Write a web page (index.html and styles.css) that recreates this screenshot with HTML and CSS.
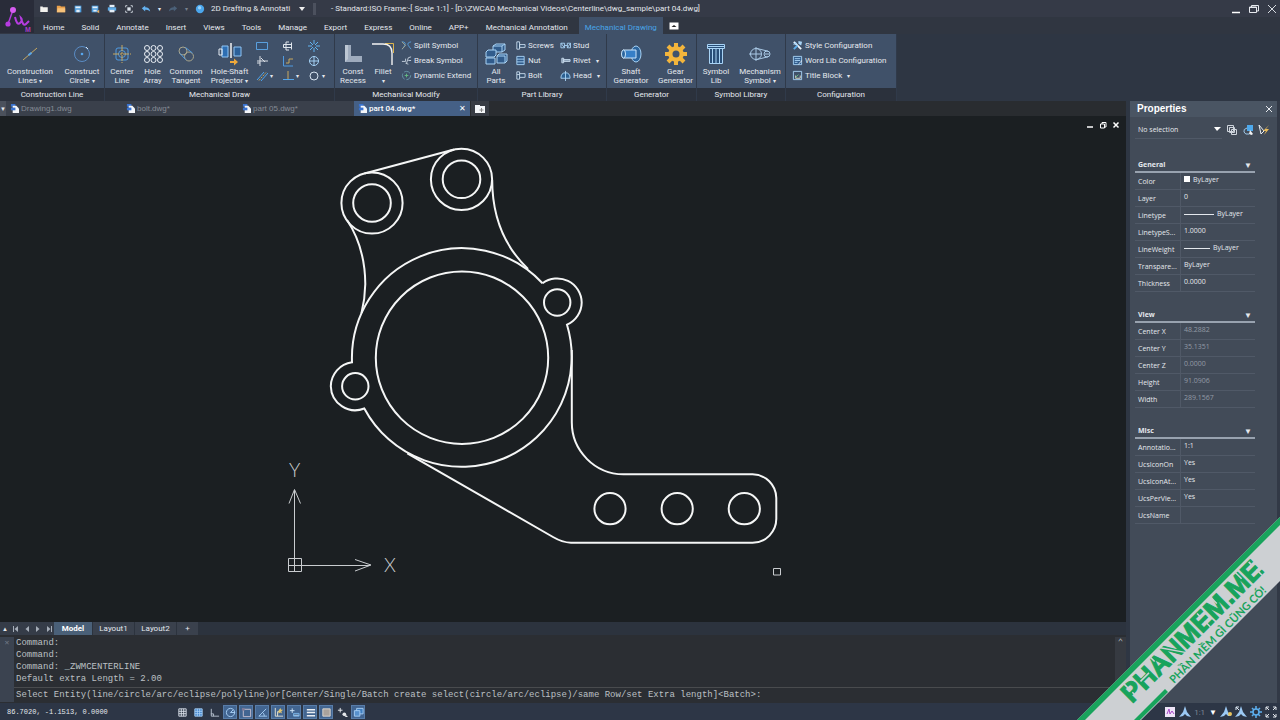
FILE: index.html
```html
<!DOCTYPE html>
<html lang="en">
<head>
<meta charset="utf-8">
<title>Part 04 - Mechanical Drawing</title>
<link rel="stylesheet" href="styles.css">
</head>
<body>
<div class="app">
  <header class="top">
    <svg class="logo" viewBox="0 0 34 33"><g fill="none" stroke="#b53ce0" stroke-width="1.4"><path d="M13 10L8 24"/><path d="M15 17q2 9 5 6t1-5q2 9 5 6t3-3" stroke-width="2"/></g><circle cx="13" cy="10" r="3" fill="#d65cf0"/><circle cx="8" cy="24" r="2.600" fill="#b63be2"/><text x="25" y="32" class="logo-mark">M</text></svg>
    <div class="bars">
      <div class="titlebar">
        <div class="quick">
          <button aria-label="New"><svg viewBox="0 0 12 12"><path d="M1.500 3h3v1h6v5.500h-9z" fill="#f3f2ee"/></svg></button>
          <button aria-label="Open"><svg viewBox="0 0 12 12"><path d="M1 2h4l1 1h5v7H1z" fill="#e9a04b"/><path d="M2 5h9v5H1z" fill="#f7c27a"/></svg></button>
          <button aria-label="Save"><svg viewBox="0 0 12 12"><path d="M2 2h8v8H2z" fill="#4d9ddd"/><path d="M3 3h6v2H3zM4 7h4v3H4z" fill="#e4eef8"/></svg></button>
          <button aria-label="Save as"><svg viewBox="0 0 12 12"><path d="M2 2h8v8H2z" fill="#4d9ddd"/><path d="M3 3h6v2H3zM4 7h4v2H4z" fill="#e4eef8"/><path d="M8 9l3-2v4z" fill="#e7ad61"/></svg></button>
          <button aria-label="Print"><svg viewBox="0 0 12 12"><path d="M3 1h6v3H3z" fill="#e4eef8"/><path d="M1 4h10v4H1z" fill="#5dabe8"/><path d="M3 7h6v3H3z" fill="#e4eef8"/></svg></button>
          <button aria-label="Preview"><svg viewBox="0 0 12 12"><path d="M2 4V2h2M8 2h2v2M10 8v2H8M4 10H2V8" fill="none" stroke="#dde4ec"/><path d="M4 4h4v4H4z" fill="#dde4ec"/></svg></button>
          <button aria-label="Undo"><svg viewBox="0 0 12 12"><path d="M1 5l4-3v2q5 0 6 5-3-3-6-2v2z" fill="#64b1ef"/></svg></button>
          <button aria-label="Undo list" class="slim">▾</button>
          <button aria-label="Redo"><svg viewBox="0 0 12 12"><path d="M11 5L7 2v2Q2 4 1 9q3-3 6-2v2z" fill="#4b6078"/></svg></button>
          <button aria-label="Redo list" class="slim dim">▾</button>
          <button aria-label="Help"><svg viewBox="0 0 12 12"><circle cx="6" cy="6" r="5" fill="#4ba6ec"/><circle cx="5.500" cy="4.500" r="2" fill="#9ad2fa"/></svg></button>
        </div>
        <select class="workspace" aria-label="Workspace"><option>2D Drafting &amp; Annotati</option></select>
        <i class="grip"></i>
        <h1>- Standard:ISO Frame:-[ Scale 1:1] - [D:\ZWCAD Mechanical Videos\Centerline\dwg_sample\part 04.dwg]</h1>
        <div class="win">
          <button aria-label="Minimize"><svg viewBox="0 0 10 10"><path d="M1 8.500h8" stroke="#fff" stroke-width="1.500"/></svg></button>
          <button aria-label="Restore"><svg viewBox="0 0 10 10"><path d="M.5 3h7v5.500h-7zM2.500 3V1.500h7V7h-2M1 3.500h6" fill="none" stroke="#e6e9ee"/></svg></button>
          <button aria-label="Close"><svg viewBox="0 0 10 10"><path d="M1 1l8 8M9 1L1 9" stroke="#d6dae0"/></svg></button>
        </div>
      </div>
      <nav class="menu">
        <button>Home</button><button>Solid</button><button>Annotate</button><button>Insert</button><button>Views</button><button>Tools</button><button>Manage</button><button>Export</button><button>Express</button><button>Online</button><button>APP+</button><button>Mechanical Annotation</button><button class="current">Mechanical Drawing</button>
        <button class="fold" aria-label="Collapse ribbon"><svg viewBox="0 0 10 8"><path d="M.5.500h9v7h-9z" fill="#fff"/><path d="M2.500 5L5 3l2.500 2z" fill="#222"/></svg></button>
      </nav>
    </div>
  </header>

  <div class="ribbon">
    <section class="group">
      <div class="tools g-line">
        <button class="big"><svg viewBox="0 0 24 24"><path d="M5 18L19 6" stroke="#c9a95f"/><path d="M10.500 13.300l3-2.600" stroke="#5aa7ea" stroke-width="2"/></svg>Construction<br>Lines <b>▾</b></button>
        <button class="big"><svg viewBox="0 0 24 24"><circle cx="12" cy="12" r="7.500" fill="none" stroke="#5a8cc4"/><circle cx="12" cy="12" r="1.300" fill="#57a7ef"/><path d="M16 5l2 2" stroke="#d9e8f7"/></svg>Construct<br>Circle <b>▾</b></button>
      </div><h2>Construction Line</h2>
    </section>
    <section class="group">
      <div class="tools g-draw">
        <button class="big"><svg viewBox="0 0 24 24"><rect x="6" y="6" width="12" height="12" rx="2" fill="none" stroke="#4f9be2"/><circle cx="12" cy="12" r="3.500" fill="none" stroke="#4f9be2"/><path d="M12 3v18M3 12h18" stroke="#c9a95f" stroke-dasharray="6 1 2 1"/></svg>Center<br>Line</button>
        <button class="big"><svg viewBox="0 0 24 24"><g fill="none" stroke="#e9eef4"><circle cx="6" cy="6" r="2.500"/><circle cx="12.500" cy="6" r="2.500"/><circle cx="19" cy="6" r="2.500"/><circle cx="6" cy="12" r="2.500"/><circle cx="12.500" cy="12" r="2.500"/><circle cx="19" cy="12" r="2.500"/><circle cx="6" cy="18" r="2.500"/><circle cx="12.500" cy="18" r="2.500"/><circle cx="19" cy="18" r="2.500"/></g></svg>Hole<br>Array</button>
        <button class="big"><svg viewBox="0 0 24 24"><g fill="none"><circle cx="9" cy="9" r="4" stroke="#a9a68d"/><circle cx="15" cy="14.500" r="4.500" stroke="#a9a68d"/><path d="M11.500 5.500l7 5.500M6 11.500l5.500 6" stroke="#4f9be2"/></g></svg>Common<br>Tangent</button>
        <button class="big"><svg viewBox="0 0 24 24"><path d="M4 4h6v11H4z" fill="#2d6eb3" stroke="#8fc5f5"/><path d="M1 7h3v6H1z" fill="none" stroke="#e5edf5"/><path d="M13 1v15" stroke="#f3f3f3" stroke-width="1.500"/><path d="M16 5h7v9h-7z" fill="#2c6098" stroke="#8fc5f5"/><path d="M12 19h4v-2.500l4 3.500-4 3.500V21h-4z" fill="#eda83b"/></svg>Hole-Shaft<br>Projector <b>▾</b></button>
        <div class="matrix">
          <button aria-label="Rectangle"><svg viewBox="0 0 12 12"><path d="M.5 2.500h11v7H.5z" fill="#37506f" stroke="#5aa0de"/></svg></button><i></i>
          <button aria-label="Shaft end"><svg viewBox="0 0 12 12"><path d="M1.500 4.500h8v3h-8zM4 2v8M9.500 2.500v7M4 2h3M4 10h3" fill="none" stroke="#e0e6ed"/></svg></button><i></i>
          <button aria-label="Burst"><svg viewBox="0 0 12 12"><path d="M6 0v4M6 8v4M0 6h4M8 6h4M2 2l3 3M7 7l3 3M10 2L7 5M5 7l-3 3" stroke="#60b4f2"/></svg></button><i></i>
          <button aria-label="Break"><svg viewBox="0 0 12 12"><path d="M4 1v10M1 6h11M5 3l4 4M1 8h3" stroke="#d9dee5" fill="none"/></svg></button><i></i>
          <button aria-label="Angle"><svg viewBox="0 0 12 12"><path d="M1.500 1v10H11" fill="none" stroke="#4f9be2"/><path d="M4 8h3V4h4" fill="none" stroke="#c9a95f"/></svg></button><i></i>
          <button aria-label="Target"><svg viewBox="0 0 12 12"><circle cx="6" cy="6" r="4.500" fill="none" stroke="#a3d0f4"/><path d="M6 1v10M1 6h10" stroke="#a3d0f4"/></svg></button><i></i>
          <button aria-label="Parallel"><svg viewBox="0 0 12 12"><path d="M1 10l7-8M5 11l7-8" stroke="#4fa4ec"/><path d="M3 10.500l7-8" stroke="#c9a95f" stroke-dasharray="2 1"/></svg></button><i>▾</i>
          <button aria-label="Perpendicular"><svg viewBox="0 0 12 12"><path d="M6 1v9" stroke="#c9a95f"/><path d="M1 9.500h11" stroke="#55a6eb"/></svg></button><i>▾</i>
          <button aria-label="Circle"><svg viewBox="0 0 12 12"><circle cx="6" cy="6" r="4" fill="none" stroke="#d5e2ef"/></svg></button><i>▾</i>
        </div>
      </div><h2>Mechanical Draw</h2>
    </section>
    <section class="group">
      <div class="tools g-modify">
        <button class="big"><svg viewBox="0 0 24 24"><path d="M4 3h6v11h11v6H4z" fill="#9eabbd"/><path d="M4 3h3v14l-3 3z" fill="#bcc6d3"/></svg>Const<br>Recess</button>
        <button class="big"><svg viewBox="0 0 24 24"><path d="M14 1.500h8.500V11" fill="none" stroke="#dcb44d"/><path d="M1 2h11q9 0 9 9v12" fill="none" stroke="#f3f3f3" stroke-width="1.400"/></svg>Fillet<br><b>▾</b></button>
        <div class="list">
          <button><svg viewBox="0 0 12 12"><path d="M1 2q5 0 3 4t-3 4M11 2Q6 3 8 6t3 4" fill="none" stroke="#56a0dd"/><path d="M1 2l4 4-4 4" fill="none" stroke="#a9a68d"/></svg>Split Symbol</button>
          <button><svg viewBox="0 0 12 12"><path d="M1 7h4V4M6 9l2-6M8 6h3M8 3l3-1M5 9l3 1" fill="none" stroke="#c8d3df"/></svg>Break Symbol</button>
          <button><svg viewBox="0 0 12 12"><circle cx="6" cy="6" r="4.500" fill="none" stroke="#6798aa" stroke-dasharray="7 2"/><path d="M6 4v4M4 6h4" stroke="#64bb83"/></svg>Dynamic Extend</button>
        </div>
      </div><h2>Mechanical Modify</h2>
    </section>
    <section class="group">
      <div class="tools g-parts">
        <button class="big"><svg viewBox="0 0 24 24"><g fill="#315c8c" stroke="#a8d3f5"><path d="M9 4l3-2h9v6l-3 2H9z"/><path d="M9 4h9v6M18 4l3-2" fill="none"/><path d="M2 10l2-2h8v5l-2 2H2z"/><path d="M2 16h9v6H2zM13 14l2-2h8v7l-2 2h-8z"/><path d="M13 14h8v7" fill="none"/></g></svg>All<br>Parts</button>
        <div class="list">
          <button><svg viewBox="0 0 12 12"><path d="M2 2h3v8H2zM5 5h6v3H5z" fill="#314d6b" stroke="#c9dced"/></svg>Screws</button>
          <button><svg viewBox="0 0 12 12"><path d="M2 1.500h8v9H2zM2 4.500h8M2 7.500h8" fill="#315c8c" stroke="#a8d3f5"/></svg>Nut</button>
          <button><svg viewBox="0 0 12 12"><path d="M2 2h3v8H2zM5 4h6v4H5M2 5h3" fill="#314d6b" stroke="#c9dced"/></svg>Bolt</button>
        </div>
        <div class="list">
          <button><svg viewBox="0 0 12 12"><path d="M1 3.500h4v5H1zM8 3.500h3.500v5H8zM5 6h3M1 3.500l4 5M8 8.500l3.500-5" fill="none" stroke="#a8d3f5"/></svg>Stud</button>
          <button><svg viewBox="0 0 12 12"><path d="M2 3.500h2v5H2zM4 5h7v2H4z" fill="#8299b1" stroke="#c9dced"/></svg>Rivet <b>▾</b></button>
          <button><svg viewBox="0 0 12 12"><path d="M1 9q0-6 5-6t5 6zM6 1v11" fill="#2d6192" stroke="#a8d3f5"/></svg>Head <b>▾</b></button>
        </div>
      </div><h2>Part Library</h2>
    </section>
    <section class="group">
      <div class="tools g-gen">
        <button class="big"><svg viewBox="0 0 24 24"><ellipse cx="17" cy="12" rx="5" ry="8" fill="#2c659e" stroke="#a8d3f5"/><path d="M4 8h13v8H4q-2-4 0-8z" fill="#367fc7" stroke="#cae4fa"/><ellipse cx="4.500" cy="12" rx="2" ry="4" fill="#2c659e" stroke="#cae4fa"/></svg>Shaft<br>Generator</button>
        <button class="big"><svg viewBox="0 0 24 24"><g stroke="#f3b53c" stroke-width="4"><path d="M12 1v22M1 12h22M4 4l16 16M20 4L4 20"/></g><circle cx="12" cy="12" r="7.800" fill="#f3b53c"/><circle cx="12" cy="12" r="3.500" fill="#40536d"/></svg>Gear<br>Generator</button>
      </div><h2>Generator</h2>
    </section>
    <section class="group">
      <div class="tools g-sym">
        <button class="big"><svg viewBox="0 0 24 24"><path d="M3.500 2.500h17v4h-17zM5.500 6.500h13v15h-13z" fill="#284e78" stroke="#a8d3f5"/><path d="M8.500 7v14M12 7v14M15.500 7v14M4 4.500h16" stroke="#a8d3f5"/></svg>Symbol<br>Lib</button>
        <button class="big"><svg viewBox="0 0 24 24"><g fill="none" stroke="#a9c9e6"><circle cx="8" cy="12" r="5.500"/><circle cx="19" cy="12" r="3"/><path d="M9 6.500l11 2.700M9 17.500l11-2.700M1 12h12M8 5v14M17 12h4"/></g></svg>Mechanism<br>Symbol <b>▾</b></button>
      </div><h2>Symbol Library</h2>
    </section>
    <section class="group">
      <div class="tools g-conf">
        <div class="list">
          <button><svg viewBox="0 0 12 12"><path d="M2 2l8 8" stroke="#edf4fb" stroke-width="2"/><path d="M1 5l3-3 2 3zM7 1l4 1-1 4-3-2z" fill="#a8d3f5"/><path d="M2 10l4-4" stroke="#60aeea" stroke-width="2"/></svg>Style Configuration</button>
          <button><svg viewBox="0 0 12 12"><path d="M1.500 1.500h9v9h-9zM3 4h6M3 6h6M3 8h3" fill="#315c8c" stroke="#a8d3f5"/><path d="M7 10l4-4" stroke="#f3f3f3"/></svg>Word Lib Configuration</button>
          <button><svg viewBox="0 0 12 12"><path d="M1.500 1.500h9v9h-9z" fill="none" stroke="#a8d3f5"/><path d="M4 9V6M4 9h5V6" fill="none" stroke="#dfdcc5"/><path d="M4 8l3-3" stroke="#65c48a"/></svg>Title Block <b>▾</b></button>
        </div>
      </div><h2>Configuration</h2>
    </section>
  </div>

  <div class="body">
    <main class="work">
      <div class="docs">
        <button class="pick" aria-label="Document list">▼</button>
        <button class="doc"><svg viewBox="0 0 10 10"><path d="M1 0h5v3H1z" fill="#3973d1"/><path d="M3 2h4l3 3v5H3z" fill="#f4f6f9"/><path d="M1 4h5v3H1z" fill="#3973d1"/></svg>Drawing1.dwg</button>
        <button class="doc"><svg viewBox="0 0 10 10"><path d="M1 0h5v3H1z" fill="#3973d1"/><path d="M3 2h4l3 3v5H3z" fill="#f4f6f9"/><path d="M1 4h5v3H1z" fill="#3973d1"/></svg>bolt.dwg*</button>
        <button class="doc"><svg viewBox="0 0 10 10"><path d="M1 0h5v3H1z" fill="#3973d1"/><path d="M3 2h4l3 3v5H3z" fill="#f4f6f9"/><path d="M1 4h5v3H1z" fill="#3973d1"/></svg>part 05.dwg*</button>
        <button class="doc open"><svg viewBox="0 0 10 10"><path d="M1 0h5v3H1z" fill="#3973d1"/><path d="M3 2h4l3 3v5H3z" fill="#f4f6f9"/><path d="M1 4h5v3H1z" fill="#3973d1"/></svg>part 04.dwg*<span>✕</span></button>
        <button class="add" aria-label="New document"><svg viewBox="0 0 10 8"><path d="M0 0h5v1h5v7H0z" fill="#f4f6f9"/><path d="M6.500 3v4M4.500 5h4" stroke="#888"/></svg></button>
      </div>
      <div class="canvas">
        <svg viewBox="0 116 1126 506" preserveAspectRatio="xMinYMin meet" role="img" aria-label="Bracket drawing">
          <g class="part">
            <circle cx="372" cy="203" r="30.600"/><circle cx="372" cy="203" r="18.800"/>
            <circle cx="461.500" cy="179.300" r="30.600"/><circle cx="461.500" cy="179.300" r="18.800"/>
            <circle cx="462" cy="357.700" r="86.200"/>
            <path d="M542.500 283.300A110 110 0 0 0 352 362.300A24.500 24.500 0 0 0 330.800 386.300A24.500 24.500 0 0 0 364.300 408.500A110.200 110.200 0 0 0 567 324.700A24.500 24.500 0 0 0 581.700 302.500A24.500 24.500 0 0 0 542.500 283.300"/>
            <circle cx="557.200" cy="302.500" r="13.200"/><circle cx="355.300" cy="386.300" r="13.200"/>
            <path d="M364.500 173.500L454 149.500"/>
            <path d="M347 220Q365 247 365.300 284Q365 299 361.500 313"/>
            <path d="M492.200 180C492.200 215 504 246 528 269"/>
            <path d="M571.800 350V422A52 52 0 0 0 623.500 474.300H752.500A24 24 0 0 1 776.300 498V518.500A24 24 0 0 1 752.500 542.800H571Q562 542.300 553 537L407.300 453.300"/>
            <circle cx="610" cy="508.700" r="15.600"/><circle cx="677.200" cy="508.700" r="15.600"/><circle cx="744.300" cy="508.700" r="15.600"/>
          </g>
          <g class="axis"><path d="M288.500 558.500h13v13h-13zM288 565.500H370M294.500 571V490M289 503.500l5.500-14 6 14M355 559.500l16 5.500-16 6"/><path d="M773.500 568.500h7v6.500h-7z"/></g>
          <text x="289" y="477" class="axis-name">Y</text><text x="384" y="572" class="axis-name">X</text>
        </svg>
        <div class="sheet-win">
          <button aria-label="Minimize drawing"><svg viewBox="0 0 8 8"><path d="M1 6h6" stroke="#fff" stroke-width="1.500"/></svg></button>
          <button aria-label="Restore drawing"><svg viewBox="0 0 8 8"><path d="M1.500 3h4v4h-4zM3 3V1.500h4V6H5.500" fill="none" stroke="#fff"/></svg></button>
          <button aria-label="Close drawing"><svg viewBox="0 0 8 8"><path d="M1.500 1.500l5 5M6.500 1.500l-5 5" stroke="#fff" stroke-width="1.500"/></svg></button>
        </div>
      </div>
      <div class="layouts">
        <button class="step lit" aria-label="More">▲</button>
        <button class="step" aria-label="First"><svg viewBox="0 0 8 8"><path d="M1.500 1v6" stroke="#a5adb8"/><path d="M6 1v6L2.500 4z" fill="#a5adb8"/></svg></button>
        <button class="step" aria-label="Previous"><svg viewBox="0 0 8 8"><path d="M6 1v6L2.500 4z" fill="#a5adb8"/></svg></button>
        <button class="step" aria-label="Next"><svg viewBox="0 0 8 8"><path d="M2 1v6l3.500-3z" fill="#a5adb8"/></svg></button>
        <button class="step" aria-label="Last"><svg viewBox="0 0 8 8"><path d="M2 1v6l3.500-3z" fill="#a5adb8"/><path d="M6.500 1v6" stroke="#a5adb8"/></svg></button>
        <button class="sheet on">Model</button><button class="sheet">Layout1</button><button class="sheet">Layout2</button><button class="sheet plus">+</button>
      </div>
      <div class="console">
        <button class="shut" aria-label="Close command line">✕</button>
        <div class="log">
          <div class="history"><p>Command:</p><p>Command:</p><p>Command: _ZWMCENTERLINE</p><p>Default extra Length = 2.00</p></div>
          <label class="prompt"><span>Select Entity(line/circle/arc/eclipse/polyline)or[Center/Single/Batch create select(circle/arc/eclipse)/same Row/set Extra length]&lt;Batch&gt;:</span><input type="text"></label>
        </div>
        <div class="scroll"><i>⌃</i><i class="thumb"></i></div>
      </div>
    </main>
    <aside class="props">
      <header><h2>Properties</h2><button aria-label="Close properties"><svg viewBox="0 0 8 8"><path d="M1 1l6 6M7 1L1 7" stroke="#e6e9ee"/></svg></button></header>
      <div class="choose">
        <select aria-label="Selection"><option>No selection</option></select>
        <button aria-label="Toggle selection mode"><svg viewBox="0 0 12 12"><path d="M1.500 1.500h6v6h-6zM3.500 3.500h5v5h-5zM5.500 5.500h5v5h-5z" fill="none" stroke="#cfd5dd"/></svg></button>
        <button aria-label="Select objects"><svg viewBox="0 0 12 12"><path d="M5 1h6v6H5z" fill="#4ea9ec"/><path d="M5 4Q1 5 2 8t5 2" fill="none" stroke="#9fc8e8"/><path d="M8 6l3 4-1.500 1L7 10z" fill="#f1f1f1"/></svg></button>
        <button aria-label="Quick select"><svg viewBox="0 0 12 12"><path d="M1 1l5 6-3 3z" fill="none" stroke="#eceff3"/><path d="M11 1L5 7h3l-2 4 5-6H8z" fill="#eabc5b"/></svg></button>
      </div>
      <section><h3>General<i>▼</i></h3>
        <table>
          <tr><th>Color</th><td><i class="swatch"></i>ByLayer</td></tr>
          <tr><th>Layer</th><td>0</td></tr>
          <tr><th>Linetype</th><td><i class="rule long"></i>ByLayer</td></tr>
          <tr><th>LinetypeS...</th><td>1.0000</td></tr>
          <tr><th>LineWeight</th><td><i class="rule"></i>ByLayer</td></tr>
          <tr><th>Transpare...</th><td>ByLayer</td></tr>
          <tr><th>Thickness</th><td>0.0000</td></tr>
        </table>
      </section>
      <section><h3>View<i>▼</i></h3>
        <table class="fixed">
          <tr><th>Center X</th><td>48.2882</td></tr>
          <tr><th>Center Y</th><td>35.1351</td></tr>
          <tr><th>Center Z</th><td>0.0000</td></tr>
          <tr><th>Height</th><td>91.0906</td></tr>
          <tr><th>Width</th><td>289.1567</td></tr>
        </table>
      </section>
      <section><h3>Misc<i>▼</i></h3>
        <table>
          <tr><th>Annotatio...</th><td>1:1</td></tr>
          <tr><th>UcsIconOn</th><td>Yes</td></tr>
          <tr><th>UcsIconAt...</th><td>Yes</td></tr>
          <tr><th>UcsPerVie...</th><td>Yes</td></tr>
          <tr><th>UcsName</th><td></td></tr>
        </table>
      </section>
    </aside>
  </div>

  <footer class="status">
    <output>86.7020, -1.1513, 0.0000</output>
    <div class="modes">
      <button aria-label="Snap"><svg viewBox="0 0 12 12"><path d="M2 2h8v8H2zM2 4.700h8M2 7.300h8M4.700 2v8M7.300 2v8" fill="none" stroke="#dce3ec"/></svg></button>
      <button aria-label="Grid"><svg viewBox="0 0 12 12"><path d="M2 2h8v8H2z" fill="#3b7ec8"/><path d="M2 2h8v8H2zM2 4.700h8M2 7.300h8M4.700 2v8M7.300 2v8" fill="none" stroke="#a9d0f5"/></svg></button>
      <button aria-label="Ortho"><svg viewBox="0 0 12 12"><path d="M2.500 2v8H11M2 7.500h3V10" fill="none" stroke="#b9c4d1"/></svg></button>
      <button class="on" aria-label="Polar"><svg viewBox="0 0 12 12"><circle cx="6" cy="6" r="4.500" fill="none" stroke="#a9d0f5"/><path d="M6 6h5M6 6l3-3" stroke="#a9d0f5"/></svg></button>
      <button class="on" aria-label="Object snap"><svg viewBox="0 0 12 12"><path d="M2.500 2.500h8v8h-8z" fill="none" stroke="#c9c1d0"/><path d="M1 1h3v3H1z" fill="#7b7897"/></svg></button>
      <button class="on" aria-label="Tracking"><svg viewBox="0 0 12 12"><path d="M11 10H2l8-8M6 6q2 1 2 4" fill="none" stroke="#a9d0f5"/></svg></button>
      <button class="on" aria-label="Dynamic UCS"><svg viewBox="0 0 12 12"><path d="M2.500 1v9H11M5 10V5h3" fill="none" stroke="#e8e5d4"/><path d="M8 1l1 2h2L9 5l1 2-2-1-2 1V4z" fill="#dfc36f"/></svg></button>
      <button class="on" aria-label="Dynamic input"><svg viewBox="0 0 12 12"><path d="M1 4h5M3.500 1.500v5M5 9h6" stroke="#d3e9fb"/><path d="M5 7h6v3H5z" fill="none" stroke="#7ab5e8"/></svg></button>
      <button class="on" aria-label="Lineweight"><svg viewBox="0 0 12 12"><path d="M2 3h9M2 6h9M2 9.500h9" stroke="#e9edf2" stroke-width="1.500"/></svg></button>
      <button class="on" aria-label="Transparency"><svg viewBox="0 0 12 12"><path d="M2 2h8v8H2z" fill="#a9a29c" stroke="#ded8d0"/></svg></button>
      <button aria-label="Cycling"><svg viewBox="0 0 12 12"><path d="M1 3.500h5M3.500 1v5" stroke="#eef1f4"/><circle cx="8" cy="8" r="2" fill="#e5e8ec"/><path d="M9 8l3 3H9z" fill="#e5e8ec"/></svg></button>
      <button class="on" aria-label="Workspace view"><svg viewBox="0 0 12 12"><path d="M4 1.500h7v6H4z" fill="#3e7dbf" stroke="#a9d0f5"/><path d="M1.500 4h6v6h-6z" fill="#5791cd" stroke="#a9d0f5"/></svg></button>
    </div>
    <div class="tray">
      <button aria-label="Mechanical"><svg viewBox="0 0 12 12"><path d="M1 1h10v10H1z" fill="#eee4f7"/><path d="M3 8l2-5 1 5 2-3 2 3" fill="none" stroke="#a847c9"/></svg></button>
      <button aria-label="Annotation scale"><svg viewBox="0 0 12 12"><path d="M6 0l2 6 4 5-4-1-2-2-2 2-4 1 4-5z" fill="#9cc9f4"/></svg></button>
      <button class="ratio">1:1 <b>▼</b></button>
      <button aria-label="Annotation visibility"><svg viewBox="0 0 12 12"><path d="M6 0l2 6 3 4-3 0-2-2-2 2-4 1 4-5z" fill="#9cc9f4"/><circle cx="10" cy="8" r="2" fill="#e8c35e"/></svg></button>
      <button aria-label="Auto scale"><svg viewBox="0 0 12 12"><path d="M6 0l2 6 4 5-4-1-2-2-2 2-4 1 4-5z" fill="#9cc9f4"/><path d="M1 1l3 3M1 4V1h3" fill="none" stroke="#dfeaf5"/></svg></button>
      <button aria-label="Settings"><svg viewBox="0 0 12 12"><path d="M6 0v12M0 6h12M2 2l8 8M10 2l-8 8" stroke="#5db0f0" stroke-width="1.500"/><circle cx="6" cy="6" r="3" fill="#2d3545" stroke="#5db0f0" stroke-width="1.500"/></svg></button>
      <button aria-label="Full screen"><svg viewBox="0 0 12 12"><path d="M1 4V1h3M8 1h3v3M11 8v3H8M4 11H1V8M1 1l3 3M11 1L8 4M11 11L8 8M1 11l3-3" fill="none" stroke="#e3e7ec"/></svg></button>
    </div>
  </footer>

  <svg class="banner" viewBox="0 0 204 204" role="img" aria-label="PHANMEM.ME">
    <path d="M0 204L204 0V64L64 204z" fill="#cdd0d3"/>
    <path d="M0 204L204 0V8L8 204z" fill="#18a35c"/>
    <path d="M57 204L89 172l3 3-29 29z" fill="#18a35c"/>
    <g transform="translate(56 187) rotate(-45)">
      <text class="brand" x="0" y="0">PHANMEM.ME</text>
      <path class="cuts" d="M8.500-21v8M8.500-8V1M22-10h12M46-21v7M59-21l15 22M87-21v10M110-7v8M110-18v6M131-21v10M166-21v10M183-7v8M183-18v6"/>
    </g>
    <text class="motto" transform="translate(98 167) rotate(-45)">PHẦN MỀM GÌ CŨNG CÓ!</text>
  </svg>
</div>
</body>
</html>
```

FILE: styles.css
```css
* { box-sizing: border-box; }
body { margin: 0; background: #1b1f22; color: #e4e8ed; font: 8px/9px Roboto, "Noto Sans", sans-serif; }
h1, h2, h3, p { margin: 0; font-size: inherit; font-weight: 400; }
button, select, input { margin: 0; padding: 0; border: 0; background: none; color: inherit; font: inherit; }
button { display: flex; align-items: center; justify-content: center; white-space: nowrap; }
i, b { font-style: normal; font-weight: 400; }
svg { display: block; flex: none; }

.app { position: relative; display: flex; flex-direction: column; min-height: 100vh; overflow: hidden; background: #2e3643; }

.top { display: flex; background: #323845; }
.logo { width: 34px; height: 33px; background: #292c39; }
.logo-mark { fill: #a63bc6; font: 700 7px "Liberation Sans", sans-serif; }
.bars { flex: 1; min-width: 0; }
.titlebar { display: flex; align-items: center; height: 17px; background: #353a47; }
.quick { display: flex; align-items: center; padding-left: 1px; }
.quick button { width: 17px; height: 16px; }
.quick svg { width: 10px; height: 10px; }
.quick .slim { width: 10px; font-size: 6px; }
.dim { color: #78818e; }
.workspace { width: 98px; height: 14px; margin-left: 2px; padding-left: 1px; appearance: none; background: url("data:image/svg+xml,%3Csvg xmlns='http://www.w3.org/2000/svg' width='6' height='4'%3E%3Cpath d='M0 0h6L3 4z' fill='%23eee'/%3E%3C/svg%3E") no-repeat right 3px center; }
.grip { width: 3px; height: 12px; margin: 0 15px 0 5px; background: #4c515e; }
.titlebar h1 { flex: 1; white-space: nowrap; }
.win { display: flex; gap: 8px; padding-right: 3px; }
.win svg { width: 10px; height: 10px; }
.menu { display: flex; height: 17px; padding-left: 1px; background: #303641; }
.menu button { padding: 4px 9px 0 8px; }
.menu .current { padding: 4px 6px 0; margin-left: 2px; background: #405169; color: #48a5e7; }
.menu .fold { padding: 0 6px; }
.fold svg { width: 10px; height: 8px; }

.ribbon { display: grid; grid-template-columns: 105px 230px 143px 129px 90px 89px 111px; height: 67px; background: #2e3643; }
.group { display: flex; flex-direction: column; border-right: 1px solid #303a4a; }
.tools { display: grid; flex: 1; background: #405169; }
.tools b, .matrix i { font-size: 6px; }
.group h2 { height: 13px; background: #2b313c; line-height: 13px; text-align: center; }
.g-line { grid-template-columns: 60px 1fr; }
.g-draw { grid-template-columns: 34px 27px 40px 47px 1fr; }
.g-modify { grid-template-columns: 36px 24px 1fr; }
.g-parts { grid-template-columns: 36px 46px 1fr; }
.g-gen { grid-template-columns: 48px 1fr; }
.g-sym { grid-template-columns: 38px 1fr; }
.big { display: block; padding-top: 5px; text-align: center; }
.big svg { width: 24px; height: 24px; margin: 0 auto 1px; }
.matrix { display: grid; grid-template-columns: repeat(3, 12px 14px); grid-auto-rows: 15px; padding: 4px 0 0 3px; align-items: center; }
.matrix i { padding-left: 2px; }
.matrix svg { width: 12px; height: 12px; }
.list { display: flex; flex-direction: column; padding: 4px 0 0 6px; }
.list button { height: 15px; gap: 2px; justify-content: flex-start; }
.list b { padding-left: 3px; }
.list svg { width: 11px; height: 11px; }
.g-parts .list { padding-left: 0; }
.g-parts .list:nth-child(2) { padding-left: 1px; }

.body { display: flex; flex: 1; }
.work { display: flex; flex: 1; flex-direction: column; min-width: 0; }
.docs { display: flex; height: 15px; background: #292c30; }
.pick { width: 6px; background: #4b515c; font-size: 6px; }
.doc { width: 116px; gap: 2px; padding: 0 4px; justify-content: flex-start; background: #3a404b; color: #858b95; font-family: "Liberation Sans", sans-serif; }
.doc svg { width: 9px; height: 9px; }
.open { background: #456086; color: #fff; font-family: Roboto, sans-serif; font-weight: 500; }
.open span { margin-left: auto; }
.add { width: 18px; margin-left: 1px; background: #383c44; }
.add svg { width: 10px; height: 8px; }
.canvas { position: relative; flex: 1; background: #1b1f22; }
.canvas > svg { width: 100%; }
.part { fill: none; stroke: #f5f6f6; stroke-width: 2; }
.axis { fill: none; stroke: #c9cccf; stroke-width: 1; }
.axis-name { fill: #c9cccf; font: 300 19px Lato, sans-serif; }
.sheet-win { position: absolute; top: 5px; right: 6px; display: flex; gap: 5px; }
.sheet-win svg { width: 8px; height: 8px; }
.layouts { display: flex; height: 13px; background: #2c333e; }
.step { width: 11px; background: #353c48; }
.step svg { width: 8px; height: 8px; }
.lit { width: 10px; font-size: 6px; }
.sheet { width: 41px; margin-right: 1px; background: #3a414d; }
.sheet.on { width: 38px; background: #4a6078; color: #fff; font-weight: 700; }
.sheet.plus { width: 21px; }
.console { display: flex; height: 68px; padding: 2px 0 1px; background: #2b2e33; color: #bcc0c4; font: 9px/12px "Liberation Mono", monospace; }
.shut { width: 14px; padding-bottom: 54px; background: #3b4350; color: #727b88; font-size: 8px; }
.log { display: flex; flex: 1; flex-direction: column; min-width: 0; }
.history { flex: 1; padding: 0 2px; border-bottom: 1px solid #494b4e; }
.prompt { display: flex; height: 14px; padding: 0 2px; line-height: 14px; white-space: nowrap; }
.prompt input { flex: 1; min-width: 0; outline: 0; }
.scroll { display: flex; flex-direction: column; justify-content: space-between; width: 11px; margin-bottom: 14px; background: #363a41; text-align: center; }
.thumb { height: 4px; background: #5c626b; }

.props { width: 150px; margin-left: 4px; padding-left: 5px; border-right: 3px solid #323946; background: #424b58; font: 7px/17px "Open Sans", "Noto Sans", sans-serif; }
.props > header { display: flex; align-items: center; justify-content: space-between; height: 16px; margin-left: -5px; padding: 0 4px 0 7px; background: #4a5563; }
.props > header h2 { color: #fff; font: 700 10px/16px "Liberation Sans", sans-serif; }
.props > header svg { width: 8px; height: 8px; }
.choose { display: flex; align-items: center; gap: 4px; height: 25px; }
.choose select { width: 87px; height: 18px; padding: 0 3px; appearance: none; border-bottom: 1px solid #505967; background: url("data:image/svg+xml,%3Csvg xmlns='http://www.w3.org/2000/svg' width='7' height='4'%3E%3Cpath d='M0 0h7L3 4z' fill='%23fff'/%3E%3C/svg%3E") no-repeat right 1px center; }
.choose svg { width: 12px; height: 12px; }
.props section { width: 120px; padding-top: 15px; }
.props h3 { display: flex; justify-content: space-between; height: 16px; padding: 0 3px; border-bottom: 2px solid #98a2af; font-weight: 700; line-height: 15px; }
.props h3 i { font-size: 8px; }
.props table { width: 100%; border-collapse: separate; border-spacing: 0; table-layout: fixed; }
.props tr { height: 17px; }
.props th { width: 45px; padding: 1px 0 0 3px; border-bottom: 1px solid #505967; font-weight: 400; line-height: 15px; text-align: left; white-space: nowrap; }
.props td { padding: 0 0 2px 3px; border-bottom: 1px solid #505967; border-left: 1px solid #505967; line-height: 14px; white-space: nowrap; }
.fixed td { color: #929aa5; }
.swatch { display: inline-block; width: 6px; height: 6px; margin-right: 3px; background: #fff; }
.rule { display: inline-block; width: 26px; margin-right: 3px; border-top: 1px solid #e4e8ed; vertical-align: middle; }
.long { width: 30px; }

.status { display: flex; align-items: center; height: 18px; background: #2d3646; }
.status output { width: 175px; padding-left: 7px; font: 7px/9px "Liberation Mono", monospace; }
.modes { display: flex; gap: 2px; }
.modes button { width: 14px; height: 14px; }
.modes .on { background: #426591; border: 1px solid #587da9; }
.modes svg { width: 11px; height: 11px; }
.tray { display: flex; align-items: center; gap: 3px; margin-left: auto; padding-right: 3px; }
.tray svg { width: 12px; height: 12px; }
.ratio { gap: 4px; color: #7e8896; }
.ratio b { color: #fff; }
.banner { position: absolute; right: 0; bottom: 0; width: 204px; height: 204px; pointer-events: none; }
.brand { fill: #18a35c; stroke: #18a35c; stroke-width: 1; font: 700 27px "Liberation Sans", sans-serif; }
.cuts { fill: none; stroke: #cdd0d3; stroke-width: 1.5; }
.motto { fill: #18a35c; font: 700 11px Lato, sans-serif; }
```
